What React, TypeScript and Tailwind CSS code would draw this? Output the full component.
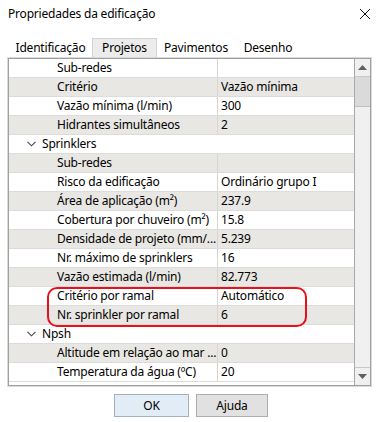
import React from "react";

type Row =
  | { kind: "cat"; label: string }
  | { kind: "prop"; label: string; value: string };

const rows: Row[] = [
  { kind: "prop", label: "Sub-redes", value: "" },
  { kind: "prop", label: "Critério", value: "Vazão mínima" },
  { kind: "prop", label: "Vazão mínima (l/min)", value: "300" },
  { kind: "prop", label: "Hidrantes simultâneos", value: "2" },
  { kind: "cat", label: "Sprinklers" },
  { kind: "prop", label: "Sub-redes", value: "" },
  { kind: "prop", label: "Risco da edificação", value: "Ordinário grupo I" },
  { kind: "prop", label: "Área de aplicação (m²)", value: "237.9" },
  { kind: "prop", label: "Cobertura por chuveiro (m²)", value: "15.8" },
  { kind: "prop", label: "Densidade de projeto (mm/...", value: "5.239" },
  { kind: "prop", label: "Nr. máximo de sprinklers", value: "16" },
  { kind: "prop", label: "Vazão estimada (l/min)", value: "82.773" },
  { kind: "prop", label: "Critério por ramal", value: "Automático" },
  { kind: "prop", label: "Nr. sprinkler por ramal", value: "6" },
  { kind: "cat", label: "Npsh" },
  { kind: "prop", label: "Altitude em relação ao mar ...", value: "0" },
  { kind: "prop", label: "Temperatura da água (ºC)", value: "20" },
];

const Chevron = () => (
  <svg width="9" height="6" viewBox="0 0 9 6" className="shrink-0">
    <polyline points="0.5,0.8 4.5,4.8 8.5,0.8" fill="none" stroke="#444" strokeWidth="1.1" />
  </svg>
);

export default function App() {
  return (
    <div
      className="w-[379px] h-[422px] bg-white text-black flex flex-col overflow-hidden"
      style={{ fontFamily: '"Noto Sans", "Open Sans", sans-serif' }}
    >
      {/* Title bar */}
      <div className="h-[28px] flex items-center justify-between pl-[8px] pr-[8px]">
        <span className="text-[12px] tracking-[-0.2px]">Propriedades da edificação</span>
        <svg width="12" height="12" viewBox="0 0 12 12">
          <path d="M1 1 L11 11 M11 1 L1 11" stroke="#111" strokeWidth="1" />
        </svg>
      </div>

      {/* Tabs */}
      <div className="mt-[10px] h-[19px] flex items-stretch pl-[9px] text-[12px] tracking-[-0.2px]">
        <div className="w-[83px] flex items-center justify-center">Identificação</div>
        <div className="w-[65px] flex items-center justify-center bg-[#ececec] border border-b-0 border-[#d3d3d3]">
          Projetos
        </div>
        <div className="w-[78px] flex items-center justify-center">Pavimentos</div>
        <div className="w-[66px] flex items-center justify-center">Desenho</div>
      </div>

      {/* Tab page */}
      <div className="mx-[7px] border border-[#dadada] h-[330px]">
        <div className="relative h-full border border-[#a0a0a0] flex">
          {/* Grid rows */}
          <div className="relative flex-1 overflow-hidden">
            {rows.map((r, i) => {
              const bg = i % 2 === 0 ? "bg-white" : "bg-[#e8e7e4]";
              if (r.kind === "cat") {
                return (
                  <div
                    key={i}
                    className={`h-[19px] flex items-center border-b border-[#dcdcdc] ${bg} pl-[18px] text-[12px] tracking-[-0.2px]`}
                  >
                    <Chevron />
                    <span className="ml-[6px]">{r.label}</span>
                  </div>
                );
              }
              return (
                <div
                  key={i}
                  className={`h-[19px] flex border-b border-[#dcdcdc] ${bg} text-[12px] tracking-[-0.2px]`}
                >
                  <div className="w-[209px] shrink-0 pl-[48px] flex items-center overflow-hidden whitespace-nowrap border-r border-[#d6d6d6]">
                    {r.label}
                  </div>
                  <div className="flex-1 pl-[3px] flex items-center whitespace-nowrap overflow-hidden">
                    {r.value}
                  </div>
                </div>
              );
            })}
            {/* highlight */}
            <div className="absolute left-[38px] top-[228px] w-[260px] h-[40px] rounded-[10px] border-2 border-[#e8101a] pointer-events-none" />
          </div>

          {/* Scrollbar */}
          <div className="w-[16px] shrink-0 bg-[#f0f0f0] border-l border-[#a9a9a9] flex flex-col">
            <div className="h-[18px] flex items-center justify-center border-b border-[#c8c8c8]">
              <svg width="9" height="5" viewBox="0 0 9 5">
                <polygon points="0,5 9,5 4.5,0" fill="#606060" />
              </svg>
            </div>
            <div className="h-[30px] bg-[#dadada] border-b border-[#c0c0c0]" />
            <div className="flex-1" />
            <div className="h-[18px] flex items-center justify-center border-t border-[#c8c8c8]">
              <svg width="9" height="5" viewBox="0 0 9 5">
                <polygon points="0,0 9,0 4.5,5" fill="#606060" />
              </svg>
            </div>
          </div>
        </div>
      </div>

      {/* Buttons */}
      <div className="mt-[7px] flex justify-center gap-[7px] pl-[3px] text-[12px] tracking-[-0.2px]">
        <button className="w-[75px] h-[23px] bg-[#e1ecf7] border border-[#a3b0bd] flex items-center justify-center">
          OK
        </button>
        <button className="w-[72px] h-[23px] bg-[#e1e1e1] border border-[#adadad] flex items-center justify-center">
          Ajuda
        </button>
      </div>
    </div>
  );
}
